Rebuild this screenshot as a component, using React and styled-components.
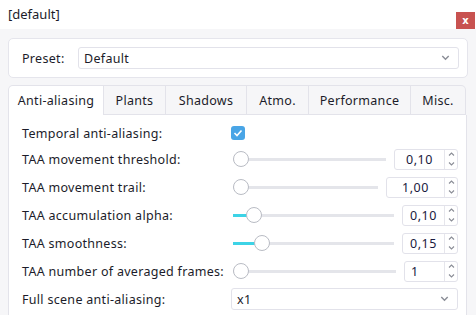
import React from 'react';
import styled, { createGlobalStyle } from 'styled-components';

const Global = createGlobalStyle`
  html, body { margin: 0; padding: 0; }
  body {
    background: #f6f6f8;
    font-family: "Noto Sans", "DejaVu Sans", sans-serif;
    color: #1c1c2a;
  }
`;

const Window = styled.div`
  width: 476px;
  height: 315px;
  overflow: hidden;
  background: #f6f6f8;
`;

const TitleBar = styled.div`
  height: 29px;
  background: #fff;
  display: flex;
  justify-content: space-between;
  align-items: flex-start;
  padding-left: 8px;
  box-sizing: border-box;
`;

const Title = styled.span`
  font-size: 13px;
  line-height: 29px;
`;

const Close = styled.div`
  width: 19px;
  height: 17px;
  margin-top: 12px;
  margin-right: 1px;
  background: #c85250;
  color: #fff;
  font-size: 10px;
  font-weight: bold;
  display: flex;
  align-items: center;
  justify-content: center;
  font-family: "DejaVu Sans", sans-serif;
`;

const Body = styled.div`
  padding: 9px 8px 0 8px;
`;

const Card = styled.div`
  height: 40px;
  box-sizing: border-box;
  background: #fff;
  border: 1px solid #e5e5ec;
  border-radius: 5px;
  display: flex;
  align-items: center;
  padding: 0 8px 0 13px;
`;

const Label = styled.span`
  font-size: 12.5px;
  letter-spacing: 0.3px;
  white-space: nowrap;
  width: ${p => p.w || 'auto'};
  flex-shrink: 0;
`;

const Combo = styled.div`
  flex: 1;
  height: 22px;
  box-sizing: border-box;
  border: 1px solid #e2e2ea;
  border-radius: 3px;
  background: #fff;
  display: flex;
  align-items: center;
  justify-content: space-between;
  padding: 0 8px 0 5px;
  font-size: 12.5px;
  letter-spacing: 0.3px;
`;

const Tabs = styled.div`
  margin-top: 7px;
`;

const TabBar = styled.div`
  display: flex;
  height: 30px;
  width: 458px;
`;

const Tab = styled.div`
  width: ${p => p.w}px;
  box-sizing: border-box;
  display: flex;
  align-items: center;
  justify-content: center;
  font-size: 12.5px;
  letter-spacing: 0.3px;
  background: ${p => (p.active ? '#fff' : '#f6f6f8')};
  border: 1px solid #e3e3ea;
  border-left: ${p => (p.first ? '1px solid #e3e3ea' : 'none')};
  border-bottom: ${p => (p.active ? 'none' : '1px solid #e3e3ea')};
  border-radius: ${p => (p.first ? '5px 0 0 0' : p.last ? '0 5px 0 0' : '0')};
`;

const Pane = styled.div`
  width: 459px;
  box-sizing: border-box;
  background: #fff;
  border: 1px solid #e3e3ea;
  border-top: none;
  padding: 6px 8px 20px 13px;
  display: flex;
  flex-direction: column;
`;

const Row = styled.div`
  height: ${p => p.h || 28}px;
  display: flex;
  align-items: center;
`;

const Controls = styled.div`
  flex: 1;
  display: flex;
  align-items: center;
  gap: 6px;
`;

const Check = styled.div`
  width: 14px;
  height: 14px;
  border-radius: 3px;
  background: #49a5e6;
  display: flex;
  align-items: center;
  justify-content: center;
`;

const Slider = styled.div`
  flex: 1;
  height: 14px;
  position: relative;
  display: flex;
  align-items: center;
  padding: 0 2px;
`;

const Track = styled.div`
  flex: 1;
  height: 3px;
  background: #e4e5ea;
  position: relative;
`;

const Fill = styled.div`
  position: absolute;
  left: 0;
  top: 0;
  bottom: 0;
  background: #3dd3e6;
`;

const Handle = styled.div`
  position: absolute;
  top: 50%;
  width: 14px;
  height: 14px;
  margin-top: -8px;
  margin-left: -7px;
  border-radius: 50%;
  background: #fff;
  border: 1px solid #b9bcc4;
`;

const Spin = styled.div`
  width: ${p => p.w}px;
  height: 21px;
  box-sizing: border-box;
  border: 1px solid #e2e2ea;
  border-radius: 3px;
  display: flex;
  background: #fff;
`;

const SpinText = styled.div`
  flex: 1;
  display: flex;
  align-items: center;
  justify-content: ${p => (p.left ? 'flex-start' : 'center')};
  padding-left: ${p => (p.left ? '6px' : '0')};
  font-size: 12.5px;
  letter-spacing: 0.5px;
  color: #1a1a40;
`;

const SpinButtons = styled.div`
  width: 12px;
  border-left: 1px solid #e6e6ec;
  display: flex;
  flex-direction: column;
  align-items: center;
  justify-content: space-around;
`;

const Chevron = ({ up, size = 5 }) => (
  <svg width={size + 2} height={size - 1} viewBox="0 0 7 4">
    <path
      d={up ? 'M1 3.5 L3.5 1 L6 3.5' : 'M1 0.5 L3.5 3 L6 0.5'}
      fill="none"
      stroke="#8a8d96"
      strokeWidth="1.1"
    />
  </svg>
);

const SliderRow = ({ label, value, pos, fill, spinW, left }) => (
  <Row>
    <Label w="209px">{label}</Label>
    <Controls>
      <Slider>
        <Track>
          {fill && <Fill style={{ width: pos }} />}
          <Handle style={{ left: pos }} />
        </Track>
      </Slider>
      <Spin w={spinW}>
        <SpinText left={left}>{value}</SpinText>
        <SpinButtons>
          <Chevron up />
          <Chevron />
        </SpinButtons>
      </Spin>
    </Controls>
  </Row>
);

const tabs = [
  ['Anti-aliasing', 96],
  ['Plants', 62],
  ['Shadows', 81],
  ['Atmo.', 62],
  ['Performance', 102],
  ['Misc.', 55],
];

export default function App() {
  return (
    <Window>
      <Global />
      <TitleBar>
        <Title>[default]</Title>
        <Close>x</Close>
      </TitleBar>
      <Body>
        <Card>
          <Label w="56px">Preset:</Label>
          <Combo>
            <span>Default</span>
            <Chevron size={7} />
          </Combo>
        </Card>
        <Tabs>
          <TabBar>
            {tabs.map(([t, w], i) => (
              <Tab key={t} w={w} active={i === 0} first={i === 0} last={i === tabs.length - 1}>
                {t}
              </Tab>
            ))}
          </TabBar>
          <Pane>
            <Row h={24}>
              <Label w="209px">Temporal anti-aliasing:</Label>
              <Check>
                <svg width="10" height="8" viewBox="0 0 10 8">
                  <path d="M1.5 4 L4 6.5 L8.5 1.5" fill="none" stroke="#fff" strokeWidth="1.6" />
                </svg>
              </Check>
            </Row>
            <SliderRow label="TAA movement threshold:" value="0,10" pos="7px" spinW={64} />
            <SliderRow label="TAA movement trail:" value="1,00" pos="7px" spinW={72} />
            <SliderRow label="TAA accumulation alpha:" value="0,10" pos="20px" fill spinW={56} />
            <SliderRow label="TAA smoothness:" value="0,15" pos="28px" fill spinW={56} />
            <SliderRow label="TAA number of averaged frames:" value="1" pos="7px" spinW={54} left />
            <Row>
              <Label w="209px">Full scene anti-aliasing:</Label>
              <Combo>
                <span>x1</span>
                <Chevron size={7} />
              </Combo>
            </Row>
          </Pane>
        </Tabs>
      </Body>
    </Window>
  );
}
